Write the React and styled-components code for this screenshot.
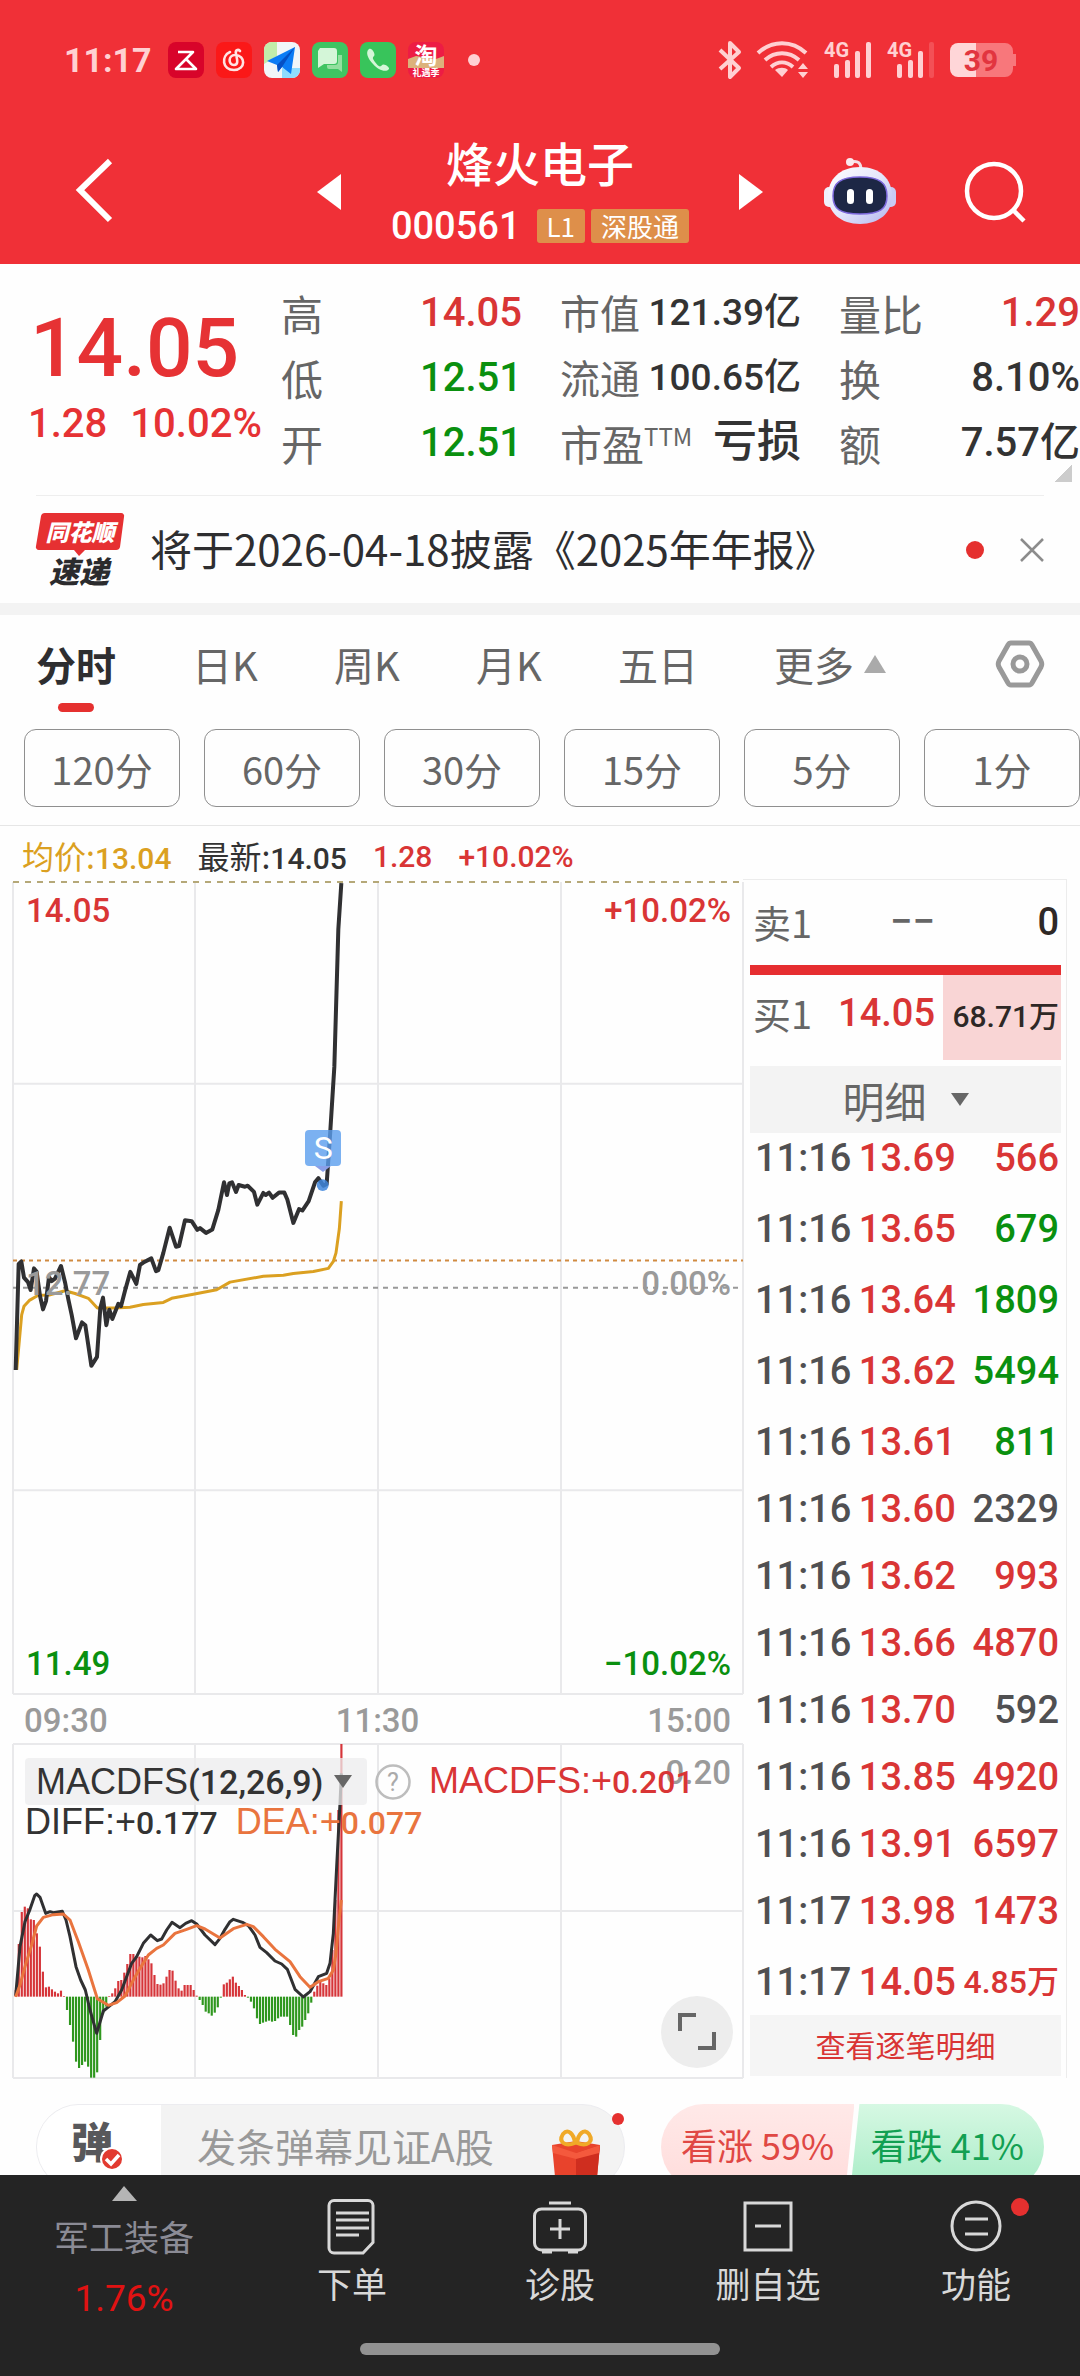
import React from 'react';
import styled, { createGlobalStyle } from 'styled-components';

const GlobalStyle = createGlobalStyle`
  * {
    box-sizing: border-box;
  }

  body {
    margin: 0;
    background: #fefefe;
    color: #333;
    font-family: 'Noto Sans CJK SC', sans-serif;
  }

  button {
    margin: 0;
    padding: 0;
    border: 0;
    background: none;
    color: inherit;
    font: inherit;
  }

  svg {
    display: block;
    flex: none;
    overflow: visible;
  }
`;

const colors = {
  header: '#f03037',
  up: '#d93535',
  down: '#0a900f',
  text: '#333',
  label: '#666',
  muted: '#9a9a9a',
  avg: '#dba021',
};

const numberFont = `Roboto, 'Noto Sans CJK SC', sans-serif`;

const Screen = styled.div`
  display: flex;
  flex-direction: column;
  height: 100vh;
`;

const Content = styled.main`
  flex: 1;
  min-height: 0;
  overflow: hidden;
`;

const Num = styled.span`
  font-family: ${numberFont};
  font-size: ${(p) => p.$size || 40}px;
  font-weight: ${(p) => p.$weight || 500};
  color: ${(p) => colors[p.$tone] || 'inherit'};
`;

/* ---------- header ---------- */

const Header = styled.header`
  flex: none;
  background: ${colors.header};
  color: #fff;
`;

const StatusBar = styled.div`
  display: flex;
  align-items: center;
  justify-content: space-between;
  height: 120px;
  padding: 0 64px;
  color: #ffd0d2;
`;

const StatusGroup = styled.div`
  display: flex;
  align-items: center;
  gap: ${(p) => p.$gap}px;
`;

const Clock = styled.time`
  flex: none;
  width: 92px;
  font-family: Roboto, sans-serif;
  font-size: 34px;
  font-weight: 700;
  white-space: nowrap;
`;

const NavBar = styled.div`
  display: flex;
  align-items: center;
  justify-content: space-between;
  height: 144px;
  padding: 0 54px;
`;

const NavSide = styled.div`
  display: flex;
  align-items: center;
  justify-content: space-between;
  width: 202px;
  padding-left: ${(p) => (p.$inset ? 22 : 0)}px;
`;

const IconButton = styled.button`
  display: flex;
  align-items: center;
  justify-content: center;
`;

const StockSwitch = styled.div`
  display: flex;
  align-items: center;
  gap: 50px;
`;

const StockTitle = styled.h1`
  margin: 0;
  font-size: 47px;
  font-weight: 500;
  line-height: 68px;
  text-align: center;
`;

const StockCode = styled.div`
  display: flex;
  align-items: center;
  justify-content: center;
  gap: 6px;
  height: 60px;
`;

const Tag = styled.span`
  padding: 0 10px;
  border-radius: 3px;
  background: #de8f4a;
  font-size: 26px;
  line-height: 34px;
`;

const CodeText = styled(Num)`
  margin-right: 10px;
`;

/* ---------- quote ---------- */

const Quote = styled.section`
  display: flex;
  padding-top: 16px;
  height: 231px;
`;

const PriceBlock = styled.div`
  flex: none;
  width: 281px;
  padding: 28px 0 0 28px;
  color: #e63234;
`;

const BigPrice = styled.div`
  padding-left: 2px;
  font-family: ${numberFont};
  font-size: 82px;
  font-weight: 500;
  line-height: 80px;
`;

const Change = styled.div`
  display: flex;
  gap: 23px;
  padding-top: 11px;
  line-height: 50px;
`;

const Stats = styled.dl`
  flex: 1;
  display: grid;
  grid-template-columns: repeat(3, minmax(0, 1fr));
  grid-auto-rows: 65px;
  column-gap: 38px;
  margin: 0;
`;

const Stat = styled.div`
  display: flex;
  align-items: center;
  justify-content: space-between;
  line-height: 65px;
  white-space: nowrap;
`;

const StatLabel = styled.dt`
  color: ${colors.label};
  font-size: ${(p) => p.$size}px;

  sup {
    font-size: 24px;
    line-height: 1;
  }
`;

const StatValue = styled.dd`
  margin: 0;
  font-family: ${numberFont};
  font-size: ${(p) => p.$size}px;
  font-weight: 500;
  color: ${(p) => colors[p.$tone]};
`;

const Corner = styled.i`
  display: block;
  width: 18px;
  height: 17px;
  margin: -30px 8px 13px auto;
  background: linear-gradient(135deg, transparent 50%, #ccc 50%);
`;

/* ---------- news ---------- */

const News = styled.section`
  display: flex;
  align-items: center;
  height: 108px;
  margin: 0 36px;
  border-top: 1px solid #eee;
`;

const NewsLogo = styled.div`
  flex: none;
  width: 88px;
  margin-right: 26px;
`;

const NewsText = styled.a`
  flex: 1;
  color: #2e2e30;
  font-size: 42px;
  line-height: 60px;
  padding-bottom: 4px;
  text-decoration: none;
  white-space: nowrap;
`;

const Dot = styled.i`
  display: block;
  width: ${(p) => p.$size}px;
  height: ${(p) => p.$size}px;
  border-radius: 50%;
  background: ${(p) => p.$color || '#e5302f'};
`;

const NewsClose = styled(IconButton)`
  margin-left: 36px;
`;

/* ---------- periods ---------- */

const Periods = styled.section`
  border-top: 12px solid #f3f3f3;
  border-bottom: 1px solid #e6e6e6;
`;

const TabRow = styled.nav`
  display: flex;
  align-items: center;
  justify-content: space-between;
  height: 98px;
  padding: 0 36px;
`;

const TabList = styled.div`
  flex: 1;
  display: flex;
  justify-content: space-between;
  margin-right: 110px;
`;

const Tab = styled.button`
  display: flex;
  align-items: center;
  gap: 10px;
  position: relative;
  color: ${(p) => (p.$active ? '#2e2e30' : colors.label)};
  font-size: 40px;
  font-weight: ${(p) => (p.$active ? 700 : 400)};
  line-height: 60px;

  &::after {
    content: '';
    display: ${(p) => (p.$active ? 'block' : 'none')};
    position: absolute;
    left: 50%;
    bottom: -18px;
    width: 36px;
    height: 9px;
    margin-left: -18px;
    border-radius: 5px;
    background: #e5302f;
  }
`;

const MinuteRow = styled.div`
  display: flex;
  gap: 24px;
  padding: 16px 0 18px 24px;
`;

const MinuteButton = styled.button`
  flex: 1;
  height: 78px;
  border: 1px solid #8f8f8f;
  border-radius: 12px;
  color: ${colors.label};
  font-size: 38px;
`;

/* ---------- chart ---------- */

const Legend = styled.div`
  display: flex;
  align-items: center;
  gap: 26px;
  height: 53px;
  padding: 8px 22px 0;
  font-size: 32px;
  line-height: 45px;
  white-space: nowrap;
`;

const LegendItem = styled.span`
  color: ${(p) => colors[p.$tone]};
`;

const Board = styled.section`
  display: grid;
  grid-template-columns: minmax(0, 730fr) minmax(0, 324fr);
  padding: 0 13px;
`;

const Charts = styled.div`
  padding-top: 3px;
`;

const ChartBox = styled.div`
  position: relative;
  height: ${(p) => p.$height}px;

  svg.plot {
    width: 100%;
    height: 100%;
  }
`;

const ChartLabel = styled.span`
  position: absolute;
  ${(p) => (p.$right ? 'right: 12px;' : 'left: 13px;')}
  ${(p) => (p.$bottom ? 'bottom: 8px;' : `top: ${p.$top}px;`)}
  font-family: ${numberFont};
  font-size: 33px;
  font-weight: 500;
  line-height: 44px;
  color: ${(p) => colors[p.$tone]};
`;

const Marker = styled.span`
  position: absolute;
  top: 30.5%;
  left: 42.5%;
  width: 36px;
  height: 36px;
  margin-left: -18px;
  border-radius: 4px;
  background: rgba(90, 158, 238, 0.8);
  color: #fff;
  font-family: Roboto, sans-serif;
  font-size: 32px;
  line-height: 36px;
  text-align: center;

  &::before {
    content: '';
    position: absolute;
    top: 36px;
    left: 10px;
    border: 8px solid transparent;
    border-top: 6px solid #8a9fe8;
    border-bottom: 0;
  }
`;

const TimeAxis = styled.div`
  display: grid;
  grid-template-columns: 1fr auto 1fr;
  align-items: center;
  height: 50px;
  padding: 2px 12px 0 11px;
  font-family: ${numberFont};
  font-size: 33px;
  font-weight: 500;
  color: ${colors.muted};

  span:last-child {
    text-align: right;
  }
`;

const Indicator = styled.div`
  position: absolute;
  top: 13px;
  left: 12px;
  font-family: 'Liberation Sans', sans-serif;
  font-size: 36px;
  line-height: 47px;
  white-space: nowrap;
`;

const IndicatorRow = styled.div`
  display: flex;
  align-items: center;
  gap: ${(p) => p.$gap}px;
  line-height: ${(p) => p.$line}px;
`;

const IndicatorButton = styled.button`
  display: flex;
  align-items: center;
  justify-content: space-between;
  width: 342px;
  height: 47px;
  padding: 0 15px 0 11px;
  border-radius: 4px;
  background: rgba(236, 236, 238, 0.75);
`;

const IndicatorValue = styled.span`
  color: ${(p) => p.$color};
`;

const Expand = styled.button`
  position: absolute;
  right: 10px;
  bottom: 10px;
  width: 72px;
  height: 72px;
  display: flex;
  align-items: center;
  justify-content: center;
  border-radius: 50%;
  background: #ededed;
`;

/* ---------- order book ---------- */

const Book = styled.aside`
  padding: 0 5px 0 7px;
  border-top: 1px solid #ececec;
  border-right: 1px solid #ececec;
`;

const BookRow = styled.div`
  display: grid;
  grid-template-columns: 68px 1fr 118px;
  align-items: start;
  height: 85px;
  color: ${colors.label};
  font-size: 38px;
  line-height: ${(p) => p.$line}px;
  text-align: right;

  span:first-child {
    padding-left: 3px;
    text-align: left;
    white-space: nowrap;
  }
`;

const BookPrice = styled(Num)`
  padding-right: 8px;
`;

const BookVolume = styled.span`
  align-self: stretch;
  padding-right: 2px;
  background: ${(p) => (p.$filled ? '#f9d5d5' : 'transparent')};
  color: #2e2826;
  font-family: ${numberFont};
  font-size: ${(p) => (p.$filled ? 30 : 38)}px;
  font-weight: 500;
  line-height: 84px;
  white-space: nowrap;
`;

const Ratio = styled.div`
  height: 10px;
  background: #e62e30;
`;

const DetailHead = styled.button`
  display: flex;
  align-items: center;
  justify-content: center;
  gap: 24px;
  width: 100%;
  height: 67px;
  margin-top: 6px;
  background: #f3f3f3;
  color: ${colors.label};
  font-size: 42px;
`;

const Trades = styled.table`
  width: 100%;
  border-collapse: collapse;
  font-family: ${numberFont};
  font-weight: 500;
  line-height: 50px;
`;

const TradeCell = styled.td`
  padding: ${(p) => p.$space}px 2px 0 5px;
  color: ${(p) => colors[p.$tone] || '#505052'};
  text-align: ${(p) => p.$align || 'left'};
  font-size: ${(p) => p.$size || 38}px;
  white-space: nowrap;
`;

const AllTrades = styled.button`
  display: block;
  width: 100%;
  height: 61px;
  margin-top: 8px;
  padding-bottom: 4px;
  background: #f5f5f5;
  color: ${colors.up};
  font-size: 30px;
`;

/* ---------- comments ---------- */

const Comments = styled.section`
  display: flex;
  justify-content: space-between;
  gap: 36px;
  padding: 26px 36px 0;
`;

const CommentBar = styled.div`
  position: relative;
  flex: 588;
  min-width: 0;
  display: flex;
  height: 86px;
  border: 1px solid #ececf0;
  border-radius: 43px;
  background: #f3f3f3;
`;

const CommentToggle = styled.button`
  flex: none;
  width: 124px;
  padding-left: 34px;
  border-radius: 43px 0 0 43px;
  background: #fff;
`;

const CommentInput = styled.input`
  flex: 1;
  min-width: 0;
  padding: 0 0 4px 36px;
  border: 0;
  outline: 0;
  background: transparent;
  font-family: 'Noto Sans CJK SC', sans-serif;
  font-size: 39px;

  &::placeholder {
    color: #999;
    opacity: 1;
  }
`;

const Gift = styled.button`
  flex: none;
  align-self: flex-end;
  margin: 0 23px 10px 0;
`;

const GiftDot = styled(Dot)`
  position: absolute;
  top: 8px;
  right: 0;
`;

const Votes = styled.div`
  flex: 384;
  display: flex;
  height: 86px;
`;

const Vote = styled.button`
  flex: 1;
  padding-bottom: 6px;
  font-size: 36px;
  line-height: 80px;
  white-space: nowrap;
  ${(p) =>
    p.$up
      ? `
    margin-right: -4px;
    border-radius: 43px 0 0 43px;
    background: linear-gradient(#ffe9e8, #ffdcdb);
    clip-path: polygon(0 0, 100% 0, calc(100% - 9px) 100%, 0 100%);
    color: #e04844;`
      : `
    border-radius: 0 43px 43px 0;
    background: linear-gradient(#d6f8e3, #a8ecc6);
    clip-path: polygon(9px 0, 100% 0, 100% 100%, 0 100%);
    color: #12a052;`}
`;

/* ---------- bottom bar ---------- */

const BottomBar = styled.footer`
  flex: none;
  background: #242424;
`;

const BottomNav = styled.nav`
  display: flex;
  height: 168px;
`;

const BottomItem = styled.button`
  flex: ${(p) => p.$grow || 208};
  display: flex;
  flex-direction: column;
  align-items: center;
  padding-top: ${(p) => p.$top || 24}px;
  color: ${(p) => p.$color || '#d8d8d8'};
  font-size: 35px;
  line-height: 52px;
`;

const BottomIcon = styled.span`
  position: relative;
  height: 58px;
`;

const BadgeDot = styled(Dot)`
  position: absolute;
  top: -1px;
  right: -26px;
`;

const SectorName = styled.span`
  margin-top: 9px;
`;

const SectorChange = styled.span`
  color: #e01212;
  font-family: Roboto, sans-serif;
  font-size: 37px;
  line-height: 74px;
`;

const HomeIndicator = styled.div`
  width: 33.33%;
  height: 12px;
  margin: 0 auto 21px;
  border-radius: 6px;
  background: #929292;
`;

/* ---------- icons ---------- */

const AppIcon = ({ fill, children }) => (
  <svg width="36" height="36" viewBox="0 0 36 36">
    <rect width="36" height="36" rx="8" fill={fill} />
    {children}
  </svg>
);

const AppIcons = () => (
  <>
    <AppIcon fill="#d8042a">
      <path d="M10 10h15L8 27h20L18 17" fill="none" stroke="#fff" strokeWidth="2.6" strokeLinejoin="round" />
    </AppIcon>
    <AppIcon fill="#fb1818">
      <path
        d="M14 10c-9 4-8 18 4 18 12 0 12-15 1-15-7 0-7 10-1 10 5 0 3-6 2-11-1-4 2-5 4-3"
        fill="none"
        stroke="#ffe3e3"
        strokeWidth="2.6"
        strokeLinecap="round"
      />
    </AppIcon>
    <AppIcon fill="#f1f6f8">
      <path d="M8 0h5v14L0 22V8a8 8 0 0 1 8-8z" fill="#c2edaa" />
      <path d="M18 26l18 0v2a8 8 0 0 1-8 8H18z" fill="#8fdcff" />
      <path d="M31 5L3 19l10 4 1 7 4-5 9 7z" fill="#0b7cf5" />
      <path d="M31 5L13 23l1 7 4-5z" fill="#0550c4" />
    </AppIcon>
    <AppIcon fill="#3fc462">
      <path d="M8 6h14a3 3 0 0 1 3 3v10a3 3 0 0 1-3 3H12l-6 4V9z" fill="#d4f6d8" />
      <path d="M26 13h4v17l-4-3H17a2 2 0 0 1-2-2v-2h8a3 3 0 0 0 3-3z" fill="#93df9f" />
    </AppIcon>
    <AppIcon fill="#38c45b">
      <path
        d="M9 7c-4 3-1 10 4 15 5 6 13 9 16 5 1-2-5-6-7-4-2 3-4 1-7-3-2-3-3-4-1-6 2-1-2-9-5-7z"
        fill="#d4f6d8"
      />
    </AppIcon>
    <AppIcon fill="#ed1c44">
      <path d="M0 17l8-3 20 3 8-3v12H0z" fill="#dcb27c" />
      <text x="18" y="22" fontSize="23" fontWeight="700" fill="#fff" textAnchor="middle">
        淘
      </text>
      <text x="18" y="34" fontSize="9" fontWeight="700" fill="#fff" textAnchor="middle">
        礼遇季
      </text>
    </AppIcon>
  </>
);

const Bluetooth = () => (
  <svg width="24" height="38" viewBox="0 0 24 38" fill="none" stroke="currentColor" strokeWidth="4">
    <path d="M2 9l19 18-9 9V2l9 9L2 28" strokeLinejoin="round" />
  </svg>
);

const Wifi = () => (
  <svg width="52" height="38" viewBox="0 0 52 38" fill="none" stroke="currentColor" strokeWidth="4">
    <path d="M1 12c14-13 34-13 48 0M8 19c10-9 24-9 34 0M14 26c7-6 15-6 22 0" />
    <path d="M18 29c4-3 10-3 13 0l-6 7z" fill="currentColor" stroke="none" />
    <path d="M46 22l5 6H41zM46 37l-5-6h10z" fill="currentColor" stroke="none" />
  </svg>
);

const Signal = ({ weak }) => (
  <svg width="48" height="38" viewBox="0 0 48 38" fill="currentColor">
    <text x="0" y="16" fontFamily="Roboto" fontSize="20" fontWeight="700">
      4G
    </text>
    <rect x="10" y="23" width="5" height="14" rx="2" />
    <rect x="21" y="19" width="5" height="18" rx="2" />
    <rect x="31" y="10" width="5" height="27" rx="2" />
    <rect x="42" y="1" width="5" height="36" rx="2" opacity={weak ? 0.2 : 1} />
  </svg>
);

const Battery = () => (
  <svg width="66" height="34" viewBox="0 0 66 34">
    <path d="M8 0h18v34H8a8 8 0 0 1-8-8V8a8 8 0 0 1 8-8z" fill="#ffd6d8" />
    <path d="M26 0h29a8 8 0 0 1 8 8v3h3v12h-3v3a8 8 0 0 1-8 8H26z" fill="#f8777b" />
    <text x="31" y="28" fontFamily="Roboto" fontSize="30" fontWeight="700" fill="#e2353f" textAnchor="middle">
      39
    </text>
  </svg>
);

const Triangle = ({ width, height, points, fill = 'currentColor' }) => (
  <svg width={width} height={height} viewBox={`0 0 ${width} ${height}`}>
    <polygon points={points} fill={fill} />
  </svg>
);

const Robot = () => (
  <svg width="72" height="70" viewBox="0 0 72 70">
    <defs>
      <linearGradient id="shell" x1="0" y1="0" x2="1" y2="1">
        <stop offset="0" stopColor="#fff" />
        <stop offset="0.5" stopColor="#e4e6fb" />
        <stop offset="1" stopColor="#b3b5ee" />
      </linearGradient>
    </defs>
    <path d="M27 5c7-2 10 1 10 8" fill="none" stroke="#f3dfe6" strokeWidth="3" />
    <circle cx="26" cy="5" r="4" fill="#fbe9ed" />
    <rect x="0" y="30" width="12" height="20" rx="5" fill="#f0f0fb" />
    <rect x="60" y="30" width="12" height="20" rx="5" fill="#c9cbf4" />
    <path d="M36 10c20 0 32 12 32 29S55 67 36 67 4 56 4 39 16 10 36 10z" fill="url(#shell)" />
    <path
      d="M36 20c20 0 27 6 27 19s-7 18-27 18S9 52 9 39s7-19 27-19z"
      fill="#1d2745"
      stroke="#7c68dc"
      strokeWidth="1.5"
    />
    <rect x="23" y="32" width="7" height="15" rx="3.5" fill="#fff" />
    <rect x="42" y="32" width="7" height="15" rx="3.5" fill="#fff" />
  </svg>
);

const NewsLogoMark = () => (
  <svg width="88" height="74" viewBox="0 0 88 74">
    <path d="M9 0h76a3 3 0 0 1 3 4l-4 30a4 4 0 0 1-4 3H49l-6 6-5-6H3a3 3 0 0 1-3-4L5 3a4 4 0 0 1 4-3z" fill="#e63032" />
    <text x="44" y="28" fontSize="23" fontWeight="900" fontStyle="italic" fill="#fff" textAnchor="middle">
      同花顺
    </text>
    <text x="43" y="70" fontSize="30" fontWeight="900" fontStyle="italic" fill="#2b2b2d" textAnchor="middle">
      速递
    </text>
  </svg>
);

const Settings = () => (
  <svg width="48" height="48" viewBox="0 0 48 48" fill="none" stroke="#999" strokeWidth="5">
    <path d="M15 3h18q2 0 3 2l9 16q1.500 3 0 6l-9 16q-1 2-3 2H15q-2 0-3-2L3 27q-1.500-3 0-6l9-16q1-2 3-2z" />
    <circle cx="24" cy="24" r="7" />
  </svg>
);

const GiftIcon = () => (
  <svg width="50" height="50" viewBox="0 0 50 50">
    <path d="M1 16l24-4 24 4-3 32-21 4-21-4z" fill="#e8432c" />
    <path d="M25 24l24-8-3 32-21 4z" fill="#cf2e1f" />
    <path d="M1 16l24 8 24-8-1 8-23 6-23-6z" fill="#f4593d" />
    <path
      d="M24 14C14 18 7 13 12 5c5-6 11 0 12 9zM26 14c10 4 17-1 12-9-5-6-11 0-12 9z"
      fill="none"
      stroke="#f0a928"
      strokeWidth="4"
    />
  </svg>
);

const DanmuIcon = () => (
  <svg width="56" height="52" viewBox="0 0 56 52">
    <text x="0" y="37" fontSize="42" fontWeight="900" fill="#58585b">
      弹
    </text>
    <circle cx="41" cy="38" r="12" fill="#fff" />
    <circle cx="41" cy="38" r="10" fill="#e23a30" />
    <path d="M35 38l5 5 8-9" fill="none" stroke="#fff" strokeWidth="3.500" />
  </svg>
);

const lineIcon = { width: 54, height: 56, viewBox: '0 0 54 56', fill: 'none', stroke: 'currentColor', strokeWidth: 3 };

const OrderIcon = () => (
  <svg {...lineIcon}>
    <path d="M9 1.500h34a5 5 0 0 1 5 5v37L38 54H9a5 5 0 0 1-5-5V6.500a5 5 0 0 1 5-5zM11 14h33M11 21h33M11 29h33M11 36h23" />
  </svg>
);

const DiagnoseIcon = () => (
  <svg {...lineIcon}>
    <rect x="1.500" y="10" width="51" height="41" rx="7" />
    <path d="M16 4h22M27 20v20M17 30h20M9 53h10M35 53h10" />
  </svg>
);

const RemoveIcon = () => (
  <svg {...lineIcon}>
    <rect x="4" y="4" width="46" height="47" />
    <path d="M14 27h26" />
  </svg>
);

const MoreIcon = () => (
  <svg {...lineIcon}>
    <circle cx="27" cy="27" r="24" />
    <path d="M16 20h23M16 35h23" />
  </svg>
);

/* ---------- data ---------- */

const stats = [
  { label: '高', value: '14.05', tone: 'up' },
  { label: '市值', value: '121.39亿', labelSize: 40, size: 37 },
  { label: '量比', value: '1.29', tone: 'up' },
  { label: '低', value: '12.51', tone: 'down' },
  { label: '流通', value: '100.65亿', labelSize: 40, size: 37 },
  { label: '换', value: '8.10%' },
  { label: '开', value: '12.51', tone: 'down' },
  { label: '市盈', sup: 'TTM', value: '亏损', size: 44 },
  { label: '额', value: '7.57亿' },
];

const tabs = ['分时', '日K', '周K', '月K', '五日'];
const minutes = ['120分', '60分', '30分', '15分', '5分', '1分'];

const trades = [
  ['11:16', '13.69', '566', 'up'],
  ['11:16', '13.65', '679', 'down'],
  ['11:16', '13.64', '1809', 'down'],
  ['11:16', '13.62', '5494', 'down'],
  ['11:16', '13.61', '811', 'down'],
  ['11:16', '13.60', '2329', 'flat'],
  ['11:16', '13.62', '993', 'up'],
  ['11:16', '13.66', '4870', 'up'],
  ['11:16', '13.70', '592', 'flat'],
  ['11:16', '13.85', '4920', 'up'],
  ['11:16', '13.91', '6597', 'up'],
  ['11:17', '13.98', '1473', 'up'],
  ['11:17', '14.05', '4.85万', 'up'],
];

const rowSpace = (i) => {
  if (i === 0) return 0;
  return i < 5 || i === trades.length - 1 ? 21 : 17;
};

const priceLine =
  '47,1480 56,1172 64,1165 72,1212 84,1225 92,1248 102,1185 110,1195 120,1265 129,1304 138,1280 147,1210 155,1222 165,1215 183,1178 195,1225 205,1275 215,1320 228,1388 246,1342 256,1350 274,1468 291,1442 301,1300 309,1270 319,1350 328,1305 337,1332 355,1288 363,1295 375,1250 391,1195 409,1230 420,1175 430,1168 454,1156 468,1193 475,1190 490,1140 509,1067 528,1122 537,1120 555,1045 575,1048 592,1073 600,1068 618,1082 637,1072 655,1015 672,935 681,972 688,938 696,935 708,963 716,943 735,948 743,945 762,963 772,1000 790,966 797,972 807,965 818,980 837,965 853,965 862,985 880,1053 897,1013 907,1017 926,990 945,935 955,923 970,945 980,940 990,800 1003,600 1015,200 1024,66';

const avgLine =
  '50,1480 65,1320 72,1295 88,1278 115,1263 150,1262 195,1250 225,1258 265,1272 292,1300 340,1300 390,1298 430,1290 490,1284 515,1272 580,1260 650,1247 690,1225 790,1208 850,1205 880,1200 940,1194 985,1185 1000,1165 1008,1140 1018,1070 1024,990';

const diffLine =
  '47,1068 60,920 75,845 90,808 104,767 110,762 120,772 137,820 150,815 160,818 187,814 198,840 210,890 228,980 242,1020 256,1050 270,1110 290,1180 310,1113 320,1105 345,1085 365,1050 395,970 410,950 430,910 452,885 472,902 485,897 500,870 516,847 540,863 557,850 575,842 590,852 615,885 645,914 660,895 675,868 690,845 700,838 730,848 745,857 765,885 780,922 800,938 825,963 845,972 862,988 885,1048 910,1071 930,1055 955,1010 980,1000 990,970 1000,880 1010,680 1020,490 1024,400';

const deaLine =
  '47,1070 60,1035 75,980 95,915 110,858 130,832 160,824 190,822 210,840 235,905 265,990 292,1076 325,1096 350,1088 375,1068 400,1020 420,985 445,945 470,925 490,915 525,880 560,868 590,857 615,867 660,894 700,866 740,853 760,860 790,890 825,928 870,965 900,1010 930,1042 955,1025 985,1015 1000,990 1008,940 1016,850 1024,780';

const macdBars = [
  20, 158, 254, 270, 265, 232, 230, 190, 150, 75, 28, 30, 22, 15, 10, 18, 2, -40, -85, -135, -195, -214, -205, -195,
  -210, -243, -243, -227, -130, -50, -30, 2, 10, 25, 47, 50, 72, 98, 128, 128, 122, 120, 118, 122, 112, 100, 65, 38,
  36, 40, 60, 80, 78, 48, 25, 18, 35, 35, 35, 20, 3, -10, -25, -45, -50, -57, -48, -32, -3, 37, 42, 52, 60, 42, 32,
  20, 5, -3, -15, -35, -65, -82, -78, -75, -72, -75, -73, -65, -60, -60, -60, -85, -115, -120, -100, -90, -70, -50,
  -18, 15, 33, 45, 40, 35, 55, 140, 290, 560, 758,
];

/* ---------- charts ---------- */

const Line = ({ points, color, width }) => (
  <polyline
    points={points}
    fill="none"
    stroke={color}
    strokeWidth={width}
    strokeLinejoin="round"
    vectorEffect="non-scaling-stroke"
  />
);

const Grid = ({ xs, ys, top, bottom }) => (
  <g stroke="#e9e9eb" strokeWidth="2">
    {xs.map((x) => (
      <line key={x} x1={x} x2={x} y1={top} y2={bottom} vectorEffect="non-scaling-stroke" />
    ))}
    {ys.map((y) => (
      <line key={y} x1="39" x2="2229" y1={y} y2={y} vectorEffect="non-scaling-stroke" />
    ))}
  </g>
);

const Dashed = ({ y, color, dash }) => (
  <line
    x1="39"
    x2="2229"
    y1={y}
    y2={y}
    stroke={color}
    strokeWidth="2"
    strokeDasharray={dash}
    vectorEffect="non-scaling-stroke"
  />
);

const gridX = [39, 585, 1134, 1683, 2229];

const PriceChart = () => (
  <ChartBox $height={812}>
    <svg className="plot" viewBox="39 63 2190 2358" preserveAspectRatio="none">
      <Grid xs={gridX} ys={[649, 1829, 2421]} top={63} bottom={2421} />
      <Dashed y={63} color="#b5a878" dash="6 6" />
      <Dashed y={1162} color="#d08a40" dash="4 4" />
      <Dashed y={1241} color="#999" dash="5 5" />
      <Line points={avgLine} color={colors.avg} width={3} />
      <Line points={priceLine} color="#303032" width={4} />
      <ellipse cx="968" cy="943" rx="18" ry="17" fill="#3f86dc" opacity="0.85" />
    </svg>
    <ChartLabel $tone="up" $top={7}>14.05</ChartLabel>
    <ChartLabel $tone="up" $top={7} $right>+10.02%</ChartLabel>
    <ChartLabel $tone="muted" $top={380}>12.77</ChartLabel>
    <ChartLabel $tone="muted" $top={380} $right>0.00%</ChartLabel>
    <ChartLabel $tone="down" $bottom>11.49</ChartLabel>
    <ChartLabel $tone="down" $bottom $right>−10.02%</ChartLabel>
    <Marker>S</Marker>
  </ChartBox>
);

const MacdChart = () => (
  <ChartBox $height={334}>
    <svg className="plot" viewBox="39 312 2190 1002" preserveAspectRatio="none">
      <Grid xs={gridX} ys={[312, 813, 1314]} top={312} bottom={1314} />
      {macdBars.map((v, i) => (
        <rect
          key={i}
          x={44 + i * 9.046}
          y={v > 0 ? 1070 - v : 1070}
          width="6.500"
          height={Math.abs(v)}
          fill={v > 0 ? '#d6353a' : '#2f971e'}
        />
      ))}
      <Line points={diffLine} color="#303032" width={3} />
      <Line points={deaLine} color="#e9743e" width={3} />
    </svg>
    <ChartLabel $tone="muted" $top={7} $right>0.20</ChartLabel>
    <Indicator>
      <IndicatorRow $gap={8} $line={47}>
        <IndicatorButton>
          <span>
            MACDFS<Num $size={34}>(12,26,9)</Num>
          </span>
          <Triangle width={18} height={13} points="0,0 18,0 9,13" fill="#666" />
        </IndicatorButton>
        <IconButton aria-label="说明">
          <svg width="36" height="36" viewBox="0 0 36 36">
            <circle cx="18" cy="18" r="16.500" fill="none" stroke="#bdbdbd" strokeWidth="2.500" />
            <text x="18" y="27" fontFamily="Roboto" fontSize="25" fill="#aaa" textAnchor="middle">
              ?
            </text>
          </svg>
        </IconButton>
        <IndicatorValue $color={colors.up}>
          &nbsp;MACDFS:+<Num $size={32}>0.201</Num>
        </IndicatorValue>
      </IndicatorRow>
      <IndicatorRow $gap={18} $line={32}>
        <IndicatorValue $color="#333">
          DIFF:+<Num $size={32}>0.177</Num>
        </IndicatorValue>
        <IndicatorValue $color="#e9743e">
          DEA:+<Num $size={32}>0.077</Num>
        </IndicatorValue>
      </IndicatorRow>
    </Indicator>
    <Expand aria-label="全屏">
      <svg width="38" height="38" viewBox="0 0 38 38" fill="none" stroke="#666" strokeWidth="4">
        <path d="M2 18V2h16M20 35h16V19" />
      </svg>
    </Expand>
  </ChartBox>
);

const OrderBook = () => (
  <Book>
    <BookRow $line={84}>
      <span>卖1</span>
      <BookPrice $size={40}>−−</BookPrice>
      <BookVolume>0</BookVolume>
    </BookRow>
    <Ratio />
    <BookRow $line={76}>
      <span>买1</span>
      <BookPrice $size={38} $tone="up">14.05</BookPrice>
      <BookVolume $filled>68.71万</BookVolume>
    </BookRow>
    <DetailHead>
      明细
      <Triangle width={18} height={13} points="0,0 18,0 9,13" />
    </DetailHead>
    <Trades>
      <tbody>
        {trades.map(([time, price, volume, tone], i) => (
          <tr key={i}>
            <TradeCell $space={rowSpace(i)}>{time}</TradeCell>
            <TradeCell $space={rowSpace(i)} $tone="up">{price}</TradeCell>
            <TradeCell
              $space={rowSpace(i)}
              $tone={tone}
              $align="right"
              $size={volume.endsWith('万') ? 32 : 38}
            >
              {volume}
            </TradeCell>
          </tr>
        ))}
      </tbody>
    </Trades>
    <AllTrades>查看逐笔明细</AllTrades>
  </Book>
);

const App = () => (
  <Screen>
    <GlobalStyle />
    <Header>
      <StatusBar>
        <StatusGroup $gap={12}>
          <Clock>11:17</Clock>
          <AppIcons />
          <span />
          <Dot $size={12} $color="#ffd0d2" />
        </StatusGroup>
        <StatusGroup $gap={15}>
          <Bluetooth />
          <Wifi />
          <Signal />
          <Signal weak />
          <Battery />
        </StatusGroup>
      </StatusBar>
      <NavBar>
        <NavSide $inset>
          <IconButton aria-label="返回">
            <svg width="37" height="66" viewBox="0 0 37 66" fill="none" stroke="#fff" strokeWidth="6">
              <path d="M34 2L4 31l30 30" />
            </svg>
          </IconButton>
        </NavSide>
        <StockSwitch>
          <IconButton aria-label="上一只">
            <Triangle width={24} height={36} points="24,0 24,36 0,18" />
          </IconButton>
          <div>
            <StockTitle>烽火电子</StockTitle>
            <StockCode>
              <CodeText $size={38}>000561</CodeText>
              <Tag>L1</Tag>
              <Tag>深股通</Tag>
            </StockCode>
          </div>
          <IconButton aria-label="下一只">
            <Triangle width={24} height={36} points="0,0 0,36 24,18" />
          </IconButton>
        </StockSwitch>
        <NavSide>
          <IconButton aria-label="智能助手">
            <Robot />
          </IconButton>
          <IconButton aria-label="搜索">
            <svg width="62" height="62" viewBox="0 0 62 62" fill="none" stroke="#fff" strokeWidth="4.500">
              <circle cx="30" cy="30" r="27" />
              <path d="M49 49l11 11" />
            </svg>
          </IconButton>
        </NavSide>
      </NavBar>
    </Header>

    <Content>
      <Quote>
        <PriceBlock>
          <BigPrice>14.05</BigPrice>
          <Change>
            <Num>1.28</Num>
            <Num>10.02%</Num>
          </Change>
        </PriceBlock>
        <Stats>
          {stats.map((s) => (
            <Stat key={s.label}>
              <StatLabel $size={s.labelSize || 42}>
                {s.label}
                {s.sup && <sup>{s.sup}</sup>}
              </StatLabel>
              <StatValue $size={s.size || 40} $tone={s.tone || 'text'}>
                {s.value}
              </StatValue>
            </Stat>
          ))}
        </Stats>
      </Quote>
      <Corner />
      <News>
        <NewsLogo>
          <NewsLogoMark />
        </NewsLogo>
        <NewsText href="#report">将于2026-04-18披露《2025年年报》</NewsText>
        <Dot $size={18} />
        <NewsClose aria-label="关闭">
          <svg width="24" height="24" viewBox="0 0 24 24" stroke="#8c8c8c" strokeWidth="2.500">
            <path d="M1 1l22 22M23 1L1 23" />
          </svg>
        </NewsClose>
      </News>

      <Periods>
        <TabRow>
          <TabList>
            {tabs.map((t, i) => (
              <Tab key={t} $active={i === 0}>{t}</Tab>
            ))}
            <Tab>
              更多
              <Triangle width={22} height={18} points="0,18 22,18 11,0" fill="#aaa" />
            </Tab>
          </TabList>
          <IconButton aria-label="设置">
            <Settings />
          </IconButton>
        </TabRow>
        <MinuteRow>
          {minutes.map((m) => (
            <MinuteButton key={m}>{m}</MinuteButton>
          ))}
        </MinuteRow>
      </Periods>

      <Legend>
        <LegendItem $tone="avg">均价:<Num $size={30}>13.04</Num></LegendItem>
        <LegendItem $tone="text">最新:<Num $size={30}>14.05</Num></LegendItem>
        <Num $size={30} $tone="up">1.28</Num>
        <Num $size={30} $tone="up">+10.02%</Num>
      </Legend>

      <Board>
        <Charts>
          <PriceChart />
          <TimeAxis>
            <span>09:30</span>
            <span>11:30</span>
            <span>15:00</span>
          </TimeAxis>
          <MacdChart />
        </Charts>
        <OrderBook />
      </Board>

      <Comments>
        <CommentBar>
          <CommentToggle aria-label="弹幕开关">
            <DanmuIcon />
          </CommentToggle>
          <CommentInput placeholder="发条弹幕见证A股" aria-label="发条弹幕" />
          <Gift aria-label="礼物">
            <GiftIcon />
          </Gift>
          <GiftDot $size={12} />
        </CommentBar>
        <Votes>
          <Vote $up>看涨 59%</Vote>
          <Vote>看跌 41%</Vote>
        </Votes>
      </Comments>
    </Content>

    <BottomBar>
      <BottomNav>
        <BottomItem $grow={248} $top={11} $color="#8b8b95">
          <Triangle width={25} height={15} points="0,15 25,15 12,0" fill="#b5b5b5" />
          <SectorName>军工装备</SectorName>
          <SectorChange>1.76%</SectorChange>
        </BottomItem>
        <BottomItem>
          <BottomIcon><OrderIcon /></BottomIcon>
          下单
        </BottomItem>
        <BottomItem>
          <BottomIcon><DiagnoseIcon /></BottomIcon>
          诊股
        </BottomItem>
        <BottomItem>
          <BottomIcon><RemoveIcon /></BottomIcon>
          删自选
        </BottomItem>
        <BottomItem>
          <BottomIcon>
            <MoreIcon />
            <BadgeDot $size={18} />
          </BottomIcon>
          功能
        </BottomItem>
      </BottomNav>
      <HomeIndicator />
    </BottomBar>
  </Screen>
);

export default App;
